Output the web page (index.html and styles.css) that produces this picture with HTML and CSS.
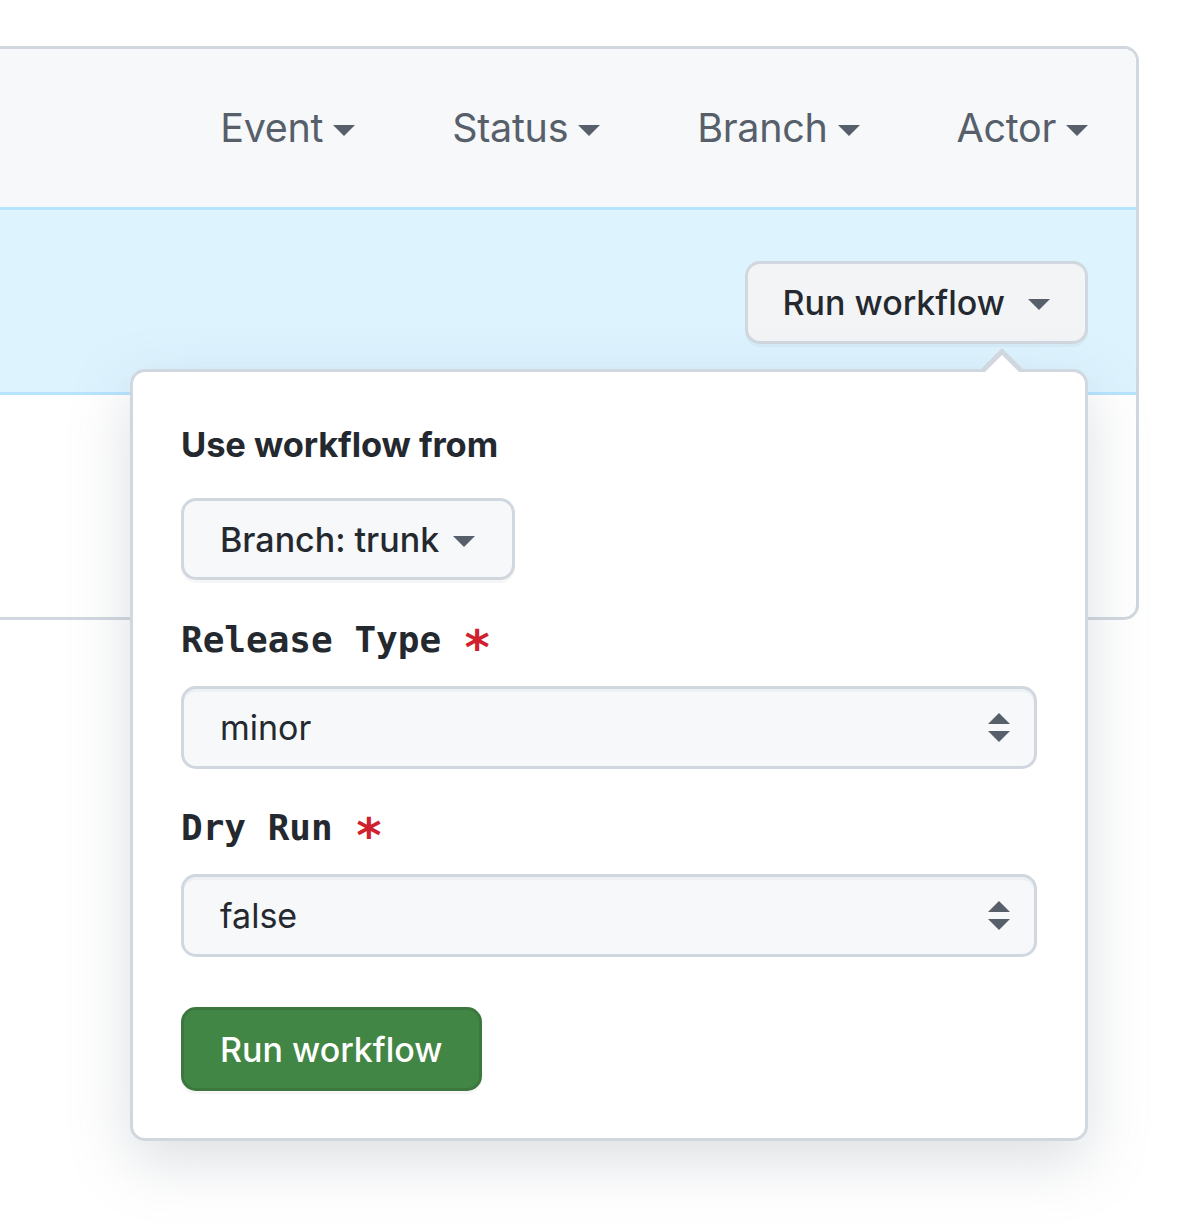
FILE: index.html
```html
<!DOCTYPE html>
<html lang="en">
<head>
<meta charset="utf-8">
<title>Workflow runs</title>
<link rel="stylesheet" href="styles.css">
</head>
<body>
<div class="box">
  <div class="box-header">
    <div class="filter">Event <span class="caret"></span></div>
    <div class="filter">Status <span class="caret"></span></div>
    <div class="filter">Branch <span class="caret"></span></div>
    <div class="filter">Actor <span class="caret"></span></div>
  </div>
  <div class="flash">
    <div class="run-wrap">
      <button class="btn run-btn">Run workflow <span class="caret caret-dark"></span></button>
      <div class="popover">
        <div class="pop-title">Use workflow from</div>
        <button class="btn branch-btn">Branch: trunk <span class="caret caret-dark"></span></button>
        <label class="field-label">Release Type <span class="req">*</span></label>
        <div class="select"><span>minor</span><span class="updown"></span></div>
        <label class="field-label">Dry Run <span class="req">*</span></label>
        <div class="select"><span>false</span><span class="updown"></span></div>
        <button class="btn btn-primary">Run workflow</button>
      </div>
    </div>
  </div>
  <div class="box-body"></div>
</div>
</body>
</html>
```

FILE: styles.css
```css
html, body {
  margin: 0;
  padding: 0;
  background: #ffffff;
}
body {
  min-height: 1232px;
  box-sizing: border-box;
  padding-top: 46px;
  font-family: Inter, "Liberation Sans", Arial, sans-serif;
  color: #24292f;
}
.box {
  margin-left: -40px;
  width: 1179px;
  box-sizing: border-box;
  border: 3px solid #d0d7de;
  border-radius: 15px;
  background: #ffffff;
}
.box-header {
  height: 158px;
  background: #f6f8fa;
  border-bottom: 3px solid #b6e3ff;
  border-radius: 12px 12px 0 0;
  display: flex;
  align-items: center;
  justify-content: flex-end;
  gap: 97px;
  padding-right: 48px;
}
.filter {
  display: flex;
  align-items: center;
  gap: 10px;
  font-size: 39.5px;
  color: #57606a;
  letter-spacing: -0.3px;
}
.caret {
  display: inline-block;
  width: 0;
  height: 0;
  border-left: 11px solid transparent;
  border-right: 11px solid transparent;
  border-top: 11px solid #57606a;
  margin-top: 4px;
}
.caret-dark {
  border-top-color: #57606a;
}
.flash {
  height: 185px;
  box-sizing: border-box;
  background: #ddf4ff;
  border-bottom: 3px solid #b6e3ff;
  display: flex;
  justify-content: flex-end;
  align-items: flex-start;
  padding: 51px 48px 0 0;
}
.run-wrap {
  position: relative;
}
.btn {
  font-family: Inter, "Liberation Sans", Arial, sans-serif;
  font-size: 34px;
  font-weight: 500;
  color: #24292f;
  background: #f6f8fa;
  border: 3px solid #d0d7de;
  border-radius: 15px;
  display: flex;
  align-items: center;
  box-sizing: border-box;
  cursor: pointer;
  box-shadow: 0 3px 0 rgba(27, 31, 36, 0.04);
}
.run-btn {
  height: 83px;
  padding: 0 35px;
  gap: 23px;
  background: #f3f4f6;
}
.popover {
  position: absolute;
  right: 0;
  top: calc(100% + 25px);
  width: 958px;
  box-sizing: border-box;
  background: #ffffff;
  border: 3px solid #d0d7de;
  border-radius: 15px;
  padding: 48px 48px 47px 48px;
  box-shadow: 0 20px 60px rgba(140, 149, 159, 0.3);
  display: flex;
  flex-direction: column;
  align-items: flex-start;
}
.popover::before,
.popover::after {
  content: "";
  position: absolute;
  width: 0;
  height: 0;
  border-left: 21px solid transparent;
  border-right: 21px solid transparent;
}
.popover::before {
  right: 62px;
  top: -24px;
  border-bottom: 21px solid #d0d7de;
}
.popover::after {
  right: 65px;
  top: -17px;
  border-left-width: 18px;
  border-right-width: 18px;
  border-bottom: 18px solid #ffffff;
}
.pop-title {
  font-size: 34.5px;
  font-weight: 700;
  line-height: 50px;
  letter-spacing: -0.1px;
}
.branch-btn {
  margin-top: 28px;
  height: 82px;
  padding: 0 37px 0 36px;
  gap: 14px;
}
.field-label {
  margin-top: 35px;
  font-family: "DejaVu Sans Mono", "Liberation Mono", monospace;
  font-weight: 700;
  font-size: 36px;
  line-height: 50px;
  color: #24292f;
}
.req {
  color: #cf222e;
  font-family: "DejaVu Sans Mono", "Liberation Mono", monospace;
  font-size: 48px;
  line-height: 0;
  vertical-align: -12px;
}
.select {
  margin-top: 21px;
  width: 100%;
  height: 83px;
  box-sizing: border-box;
  border: 3px solid #d0d7de;
  border-radius: 15px;
  background: #f6f8fa;
  display: flex;
  align-items: center;
  justify-content: space-between;
  padding: 0 24px 0 36px;
  font-size: 34px;
  color: #24292f;
  box-shadow: inset 0 3px 0 rgba(208, 215, 222, 0.2);
}
.select + .field-label {
  margin-top: 34px;
}
.updown {
  display: flex;
  flex-direction: column;
  gap: 7px;
}
.updown::before,
.updown::after {
  content: "";
  display: block;
  width: 0;
  height: 0;
  border-left: 11px solid transparent;
  border-right: 11px solid transparent;
}
.updown::before {
  border-bottom: 11px solid #57606a;
}
.updown::after {
  border-top: 11px solid #57606a;
}
.btn-primary {
  margin-top: 50px;
  height: 84px;
  padding: 0 37px 0 36px;
  background: #428646;
  color: #ffffff;
  border-color: rgba(27, 31, 36, 0.15);
  font-weight: 500;
}
.box-body {
  height: 222px;
}
```
